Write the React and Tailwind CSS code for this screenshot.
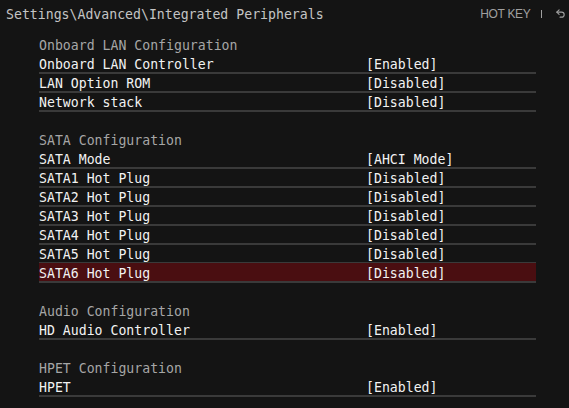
import { Undo2 } from "lucide-react";

const sections = [
  {
    title: "Onboard LAN Configuration",
    rows: [
      ["Onboard LAN Controller", "[Enabled]"],
      ["LAN Option ROM", "[Disabled]"],
      ["Network stack", "[Disabled]"],
    ],
  },
  {
    title: "SATA Configuration",
    rows: [
      ["SATA Mode", "[AHCI Mode]"],
      ["SATA1 Hot Plug", "[Disabled]"],
      ["SATA2 Hot Plug", "[Disabled]"],
      ["SATA3 Hot Plug", "[Disabled]"],
      ["SATA4 Hot Plug", "[Disabled]"],
      ["SATA5 Hot Plug", "[Disabled]"],
      ["SATA6 Hot Plug", "[Disabled]", true],
    ],
  },
  {
    title: "Audio Configuration",
    rows: [["HD Audio Controller", "[Enabled]"]],
  },
  {
    title: "HPET Configuration",
    rows: [["HPET", "[Enabled]"]],
  },
];

const mono = "font-['DejaVu_Sans_Mono','Liberation_Mono',monospace] text-[13.2px]";

export default function App() {
  return (
    <div className={`w-[569px] h-[408px] bg-[#141414] overflow-hidden ${mono}`}>

      {/* TOP BAR */}

      <div className="h-[36px] flex justify-between">
        <div className="pl-[6px] pt-[7px] leading-[16px] text-[#c4c4c4]">
          Settings\Advanced\Integrated Peripherals
        </div>

        <div className="flex items-start pt-[6px] pr-[3px] text-[#a0a0a0] font-['Liberation_Sans',sans-serif]">
          <span className="text-[12px] leading-[12px] tracking-[-0.3px] mt-[2px]">HOT KEY</span>
          <span className="w-[1.5px] h-[8px] bg-[#a0a0a0] ml-[10px] mt-[4px]" />
          <Undo2 size={11} strokeWidth={2.4} className="ml-[13px] mt-[2px]" />
        </div>
      </div>

      {/* SECTIONS */}

      <div className="pl-[39px] w-[536px] flex flex-col gap-[19px]">
        {sections.map((section) => (
          <div key={section.title}>
            <div className="h-[19px] pt-[2px] leading-[16px] text-[#a6a6a6]">
              {section.title}
            </div>

            {section.rows.map(([label, value, active]) => (
              <div
                key={label}
                className="h-[19px] border-b-2 border-[#3a3a3a] flex text-[#f2f2f2]"
              >
                <div
                  className={`flex-1 flex leading-[16px] ${
                    active ? "bg-[#4a0e11] -mt-px pt-[3px]" : "pt-[2px]"
                  }`}
                >
                  <span className="w-[327px]">{label}</span>
                  <span>{value}</span>
                </div>
              </div>
            ))}
          </div>
        ))}
      </div>

    </div>
  );
}
